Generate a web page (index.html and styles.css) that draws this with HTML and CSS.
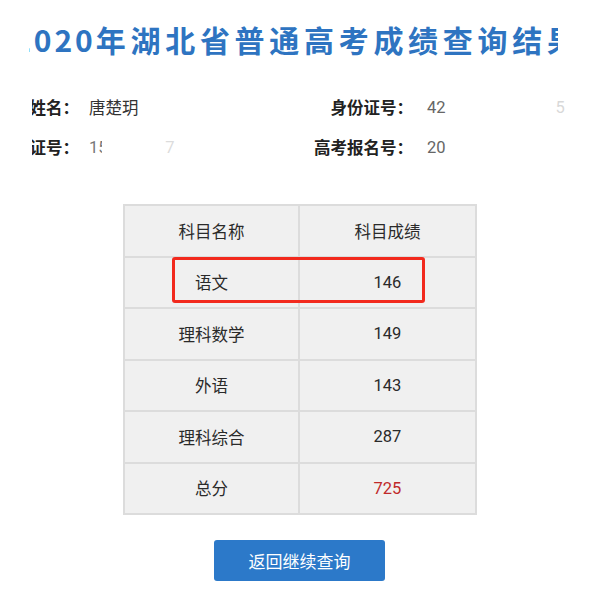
FILE: index.html
```html
<!DOCTYPE html>
<html lang="zh-CN">
<head>
<meta charset="utf-8">
<title>2020年湖北省普通高考成绩查询结果</title>
<link rel="stylesheet" href="styles.css">
</head>
<body>
<div class="page">
  <div class="title-clip">
    <h1 class="title"><span class="year">2020</span>年湖北省普通高考成绩查询结果</h1>
  </div>

  <div class="info">
    <div class="info-row">
      <div class="label label-a"><span>考生姓名：</span></div>
      <div class="value value-a">唐楚玥</div>
      <div class="label label-b"><span>身份证号：</span></div>
      <div class="value value-b">42<span class="blur"></span><span class="faint">5</span></div>
    </div>
    <div class="info-row">
      <div class="label label-a"><span>准考证号：</span></div>
      <div class="value value-a">1<span class="cut">5</span><span class="blur blur-short"></span><span class="faint">7</span></div>
      <div class="label label-b"><span>高考报名号：</span></div>
      <div class="value value-b">20</div>
    </div>
  </div>

  <div class="table-wrap">
    <table class="scores">
      <tr><td>科目名称</td><td>科目成绩</td></tr>
      <tr><td>语文</td><td>146</td></tr>
      <tr><td>理科数学</td><td>149</td></tr>
      <tr><td>外语</td><td>143</td></tr>
      <tr><td>理科综合</td><td>287</td></tr>
      <tr><td>总分</td><td class="total">725</td></tr>
    </table>
    <div class="highlight"></div>
  </div>

  <div class="actions">
    <button class="back-btn" type="button">返回继续查询</button>
  </div>
</div>
</body>
</html>
```
FILE: styles.css
```css
* { box-sizing: border-box; }
html, body { margin: 0; padding: 0; background: #fff; }
body {
  font-family: Roboto, "Noto Sans CJK SC", sans-serif;
  color: #333;
  width: 593px;
  height: 595px;
  overflow: hidden;
}
.page { display: flex; flex-direction: column; }

.title-clip {
  margin: 21px 0 0 29px;
  width: 529px;
  overflow: hidden;
  display: flex;
}
.title {
  margin: 0 0 0 -16px;
  font-family: "Noto Sans CJK SC", sans-serif;
  font-size: 30px;
  line-height: 36px;
  font-weight: 700;
  letter-spacing: 4.7px;
  color: #2e74c1;
  white-space: nowrap;
}
.year { letter-spacing: 3px; }

.info { margin-top: 30px; display: flex; flex-direction: column; }
.info-row {
  display: flex;
  height: 40px;
  align-items: center;
  font-size: 16.5px;
  font-family: "Noto Sans CJK SC", sans-serif;
}
.label {
  display: flex;
  justify-content: flex-end;
  overflow: hidden;
  white-space: nowrap;
  font-weight: 700;
  color: #222;
}
.label-a { margin-left: 32px; width: 47px; }
.label-b { width: 100px; }
.value { white-space: nowrap; color: #333; display: flex; align-items: center; }
.value-a { margin-left: 10px; width: 224px; font-family: Roboto, "Noto Sans CJK SC", sans-serif; }
.value-b { margin-left: 14px; font-family: Roboto, sans-serif; color: #666; }
.info-row:nth-child(2) .value-a { color: #777; }
.cut { display: inline-block; width: 4px; overflow: hidden; }
.blur { display: inline-block; width: 110px; height: 20px; }
.blur-short { width: 63px; }
.faint { opacity: 0.25; }

.table-wrap {
  position: relative;
  margin: 37px 0 0 123px;
  width: 354px;
}
.scores {
  border-collapse: collapse;
  width: 354px;
  background: #f0f0f0;
  border: 2px solid #d6d6d6;
}
.scores td {
  border: 2px solid #dcdcdc;
  height: 51.5px;
  padding: 0;
  text-align: center;
  font-size: 16.5px;
  color: #2a2a2a;
}
.scores td:first-child { width: 175px; }
.scores .total { color: #c0292a; }
.highlight {
  position: absolute;
  left: 49px;
  top: 53px;
  width: 253px;
  height: 46px;
  border: 3px solid #f2291d;
  border-radius: 3px;
}

.actions { margin-top: 25px; display: flex; padding-left: 214px; }
.back-btn {
  width: 171px;
  height: 41px;
  border: 0;
  border-radius: 3px;
  background: #2c79c9;
  color: #fff;
  font-family: "Noto Sans CJK SC", sans-serif;
  font-size: 17px;
  padding: 0;
}
```
